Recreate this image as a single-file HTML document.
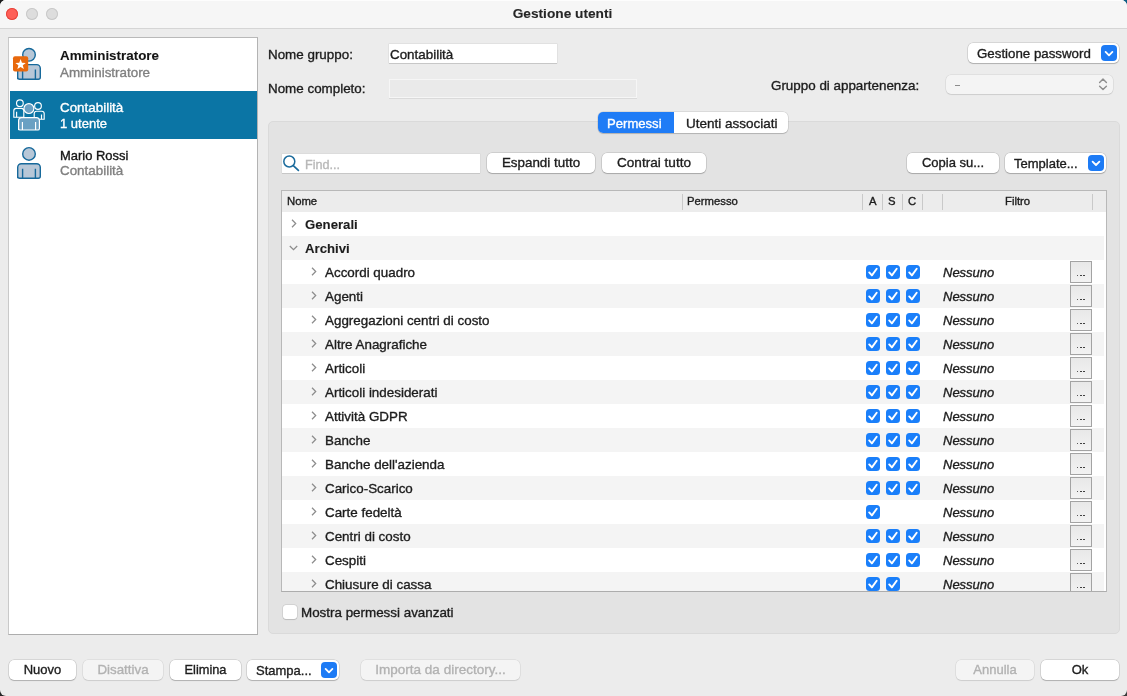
<!DOCTYPE html>
<html><head><meta charset="utf-8">
<style>
*{box-sizing:border-box;margin:0;padding:0}
html,body{width:1127px;height:696px;overflow:hidden;background:#222}
body{font-family:"Liberation Sans",sans-serif;font-size:13px;color:#1d1d1d;position:relative;-webkit-text-stroke:0.35px currentColor}
.win{will-change:transform;position:absolute;left:0;top:0;width:1127px;height:696px;border-radius:6px;background:#ececec;overflow:hidden}
.abs{position:absolute}
.t{position:absolute;white-space:nowrap;line-height:16px}
.title{left:0;top:0;width:1127px;height:29px;background:#f6f6f6;border-bottom:1px solid #d5d5d5;box-shadow:inset 0 1px 0 #fdfdfd}
.tl{position:absolute;top:8px;width:12px;height:12px;border-radius:50%}
.list{left:8px;top:37px;width:250px;height:598px;background:#fff;border:1px solid #b9b9b9;border-left-color:#c9c9c9;border-right-color:#b3b3b3;border-bottom:1.5px solid #adadad}
.sel{left:10px;top:91px;width:247px;height:48px;background:#0b75a5}
.field{background:#fff;box-shadow:0 0 0 0.5px #d6d6d6, 0 1px 0 0 #b9b9b9}
.btn{position:absolute;height:20px;border-radius:5px;background:#fff;box-shadow:0 0 0 0.5px rgba(0,0,0,.18),0 1px 1px rgba(0,0,0,.18);text-align:center;line-height:20px;font-size:13px;color:#1d1d1d}
.btn.dis{background:#f4f4f4;color:#b2b2b2;box-shadow:0 0 0 0.5px rgba(0,0,0,.1),0 1px 1px rgba(0,0,0,.08)}
.blue{position:absolute;width:16px;height:16px;border-radius:4px;background:#1d7bf5}
.blue svg{position:absolute;left:0;top:0}
.group{left:268px;top:121px;width:852px;height:513px;background:#e3e3e3;border:1px solid #dadada;border-radius:5px}
.table{left:281px;top:190px;width:826px;height:402px;background:#fff;border:1px solid #b8b8b8;border-bottom:1.5px solid #adadad;overflow:hidden}
.hdr{position:absolute;left:0;top:0;width:824px;height:21px;background:#ececec}
.sep{position:absolute;top:3px;width:1px;height:16px;background:#c9c9c9}
.row{position:absolute;left:0;width:822px;height:24px}
.row.alt{background:#f4f4f4}
.rt{position:absolute;top:5px;line-height:16px;font-size:13.4px;white-space:nowrap}
.chev{position:absolute;top:8px}
.cb{position:absolute;top:5px;width:14px;height:14px;border-radius:3.5px;background:#1a7ffa}
.nes{position:absolute;left:661px;top:5px;line-height:16px;font-style:italic;font-size:13px}
.dots{position:absolute;left:788px;top:1px;width:22px;height:22px;border:1px solid #a3a3a3;background:linear-gradient(#e8e8e8,#f2f2f2)}
.dots i{position:absolute;top:12.6px;width:1.9px;height:1.9px;border-radius:50%;background:#2a2a2a}
</style></head><body>
<div class="abs" style="left:0;top:0;width:20px;height:20px;background:#1c1c1c"></div><div class="abs" style="left:1107px;top:0;width:20px;height:20px;background:#0b5d84"></div><div class="abs" style="left:0;top:676px;width:20px;height:20px;background:#262626"></div><div class="abs" style="left:1107px;top:676px;width:20px;height:20px;background:#3a3a3a"></div>
<div class="win">
  <div class="abs title"></div>
  <div class="tl" style="left:6px;background:#fe5f57;box-shadow:inset 0 0 0 1px #e5443c"></div>
  <div class="tl" style="left:26px;background:#dddddd;box-shadow:inset 0 0 0 1px #c8c8c8"></div>
  <div class="tl" style="left:46px;background:#dddddd;box-shadow:inset 0 0 0 1px #c8c8c8"></div>
  <div class="t" style="left:-1px;width:1127px;text-align:center;top:6px;font-weight:bold;font-size:13.7px;color:#262626;-webkit-text-stroke:0.1px #262626">Gestione utenti</div>

  <!-- left list -->
  <div class="abs list"></div>
  <div class="abs sel"></div>

  <svg class="abs" style="left:0;top:0" width="60" height="190" viewBox="0 0 60 190">
    <g stroke="#17699b" stroke-width="1.4" fill="#b7c7d7">
      <circle cx="29" cy="54.8" r="6.3"/>
      <path d="M17.7 79.2 V68.2 a3.6 3.6 0 0 1 3.6 -3.6 H36.7 a3.6 3.6 0 0 1 3.6 3.6 V77.2 a2 2 0 0 1 -2 2 H19.7 a2 2 0 0 1 -2 -2 Z"/>
      <path d="M22.6 69.6 V79.2 M35.4 69.6 V79.2" fill="none"/>
    </g>
    <rect x="13" y="56.2" width="15.2" height="15.2" rx="2" fill="#e8680c"/>
    <path d="M20.60 59.10 L21.95 62.74 L25.83 62.90 L22.79 65.31 L23.83 69.05 L20.60 66.90 L17.37 69.05 L18.41 65.31 L15.37 62.90 L19.25 62.74 Z" fill="#fff"/>
    <g stroke="#17699b" stroke-width="1.4" fill="#b7c7d7">
      <circle cx="29" cy="153.9" r="6.3"/>
      <path d="M17.7 178.3 V167.3 a3.6 3.6 0 0 1 3.6 -3.6 H36.7 a3.6 3.6 0 0 1 3.6 3.6 V176.3 a2 2 0 0 1 -2 2 H19.7 a2 2 0 0 1 -2 -2 Z"/>
      <path d="M22.6 168.7 V178.3 M35.4 168.7 V178.3" fill="none"/>
    </g>
    <g stroke="#fff" stroke-width="1.15" fill="#0b75a5">
      <circle cx="19.9" cy="103.2" r="3.35"/>
      <circle cx="38" cy="106" r="3.35"/>
      <path d="M13.8 117.2 V110.8 a2.4 2.4 0 0 1 2.4 -2.4 H21.4 a2.4 2.4 0 0 1 2.4 2.4 V117.2 Z"/>
      <path d="M16.6 111.8 V117.2" fill="none"/>
      <path d="M34.2 119.2 V113.6 a2.4 2.4 0 0 1 2.4 -2.4 H41.8 a2.4 2.4 0 0 1 2.4 2.4 V119.2 Z"/>
      <path d="M41.5 114.6 V119.2" fill="none"/>
      <circle cx="28.9" cy="108.5" r="4.95" fill="#6aa0c3"/>
      <path d="M18.6 130 V120.6 a3 3 0 0 1 3 -3 H36.4 a3 3 0 0 1 3 3 V128.4 a1.6 1.6 0 0 1 -1.6 1.6 H20.2 a1.6 1.6 0 0 1 -1.6 -1.6 Z" fill="#6aa0c3"/>
      <path d="M22.4 122 V130 M35.6 122 V130" fill="none"/>
    </g>
  </svg>
  <div class="t" style="left:60px;top:48.3px;font-weight:bold;font-size:13.4px;color:#141414;-webkit-text-stroke:0.1px #141414">Amministratore</div>
  <div class="t" style="left:60px;top:64.5px;font-size:13.4px;color:#808080">Amministratore</div>
  <div class="t" style="left:60px;top:99.7px;font-size:13.4px;color:#fff">Contabilità</div>
  <div class="t" style="left:60px;top:115.5px;font-size:13px;color:#fff">1 utente</div>
  <div class="t" style="left:60px;top:147.6px;font-size:12.95px;color:#141414">Mario Rossi</div>
  <div class="t" style="left:60px;top:163.4px;font-size:13.4px;color:#808080">Contabilità</div>

  <!-- right form -->
  <div class="t" style="left:268px;top:46.6px;font-size:13.4px">Nome gruppo:</div>
  <div class="abs field" style="left:389px;top:44px;width:168px;height:19px"></div>
  <div class="t" style="left:390px;top:46.6px;font-size:13.4px">Contabilità</div>
  <div class="t" style="left:268px;top:80.6px;font-size:13.4px">Nome completo:</div>
  <div class="abs" style="left:389px;top:79px;width:248px;height:19px;background:#eaeaea;border:1px solid #f6f6f6;box-shadow:0 1px 0 #dadada"></div>

  <div class="btn" style="left:968px;top:42.5px;width:151px;height:20px;line-height:22px;text-align:left;padding-left:9px;font-size:13.3px">Gestione password</div>
  <div class="blue" style="left:1101px;top:44.5px"><svg width="16" height="16" viewBox="0 0 16 16"><path d="M4.6 6.9 L8 10.3 L11.4 6.9" fill="none" stroke="#fff" stroke-width="1.8" stroke-linecap="round" stroke-linejoin="round"/></svg></div>

  <div class="t" style="left:771px;top:78px;font-size:13.4px">Gruppo di appartenenza:</div>
  <div class="btn dis" style="left:946px;top:74.5px;width:167px;height:19.5px"></div>
  <div class="abs" style="left:955px;top:85px;width:4.5px;height:1.2px;background:#8c8c8c"></div>
  <svg class="abs" style="left:1096px;top:76px" width="14" height="16" viewBox="0 0 14 16"><path d="M3.6 6.5 L7 3.1 L10.4 6.5 M3.6 10.2 L7 13.6 L10.4 10.2" fill="none" stroke="#8e8e8e" stroke-width="1.4" stroke-linecap="round" stroke-linejoin="round"/></svg>

  <!-- group box -->
  <div class="abs group"></div>
  <!-- segmented -->
  <div class="abs" style="left:598px;top:112px;width:190px;height:21px;border-radius:5px;background:#fff;box-shadow:0 0 0 0.5px rgba(0,0,0,.15),0 1px 1px rgba(0,0,0,.15)"></div>
  <div class="abs" style="left:598px;top:112px;width:76px;height:21px;border-radius:5px 0 0 5px;background:#1f7cf6"></div>
  <div class="t" style="left:607px;top:116px;color:#fff;font-size:13.1px">Permessi</div>
  <div class="t" style="left:686px;top:116px;font-size:13.5px">Utenti associati</div>

  <!-- search row -->
  <div class="abs field" style="left:282px;top:154px;width:198px;height:19px"></div>
  <svg class="abs" style="left:281px;top:153px" width="20" height="20" viewBox="0 0 20 20"><circle cx="8.3" cy="8.5" r="5.5" fill="none" stroke="#1b6b9c" stroke-width="1.5"/><path d="M12.3 12.6 L17.4 17.4" stroke="#1b6b9c" stroke-width="1.7" stroke-linecap="round"/></svg>
  <div class="t" style="left:305px;top:156.5px;color:#b8b8b8;font-size:12.6px">Find...</div>
  <div class="btn" style="left:487px;top:153px;width:108px;font-size:13.4px">Espandi tutto</div>
  <div class="btn" style="left:602px;top:153px;width:104px;font-size:13.6px">Contrai tutto</div>
  <div class="btn" style="left:907px;top:153px;width:92px">Copia su...</div>
  <div class="btn" style="left:1005px;top:153px;width:101px;text-align:left;padding-left:9px;line-height:22px">Template...</div>
  <div class="blue" style="left:1088px;top:155px;width:16px;height:15.5px"><svg width="16" height="15.5" viewBox="0 0.3 16 15.5"><path d="M4.6 6.9 L8 10.3 L11.4 6.9" fill="none" stroke="#fff" stroke-width="1.8" stroke-linecap="round" stroke-linejoin="round"/></svg></div>

  <!-- table -->
  <div class="abs table" id="tbl">
    <div class="hdr">
      <div class="t" style="left:5px;top:2px;font-size:11.3px">Nome</div>
      <div class="sep" style="left:400px"></div>
      <div class="t" style="left:405px;top:2px;font-size:11.3px">Permesso</div>
      <div class="sep" style="left:580px"></div>
      <div class="t" style="left:587px;top:2px;font-size:11.3px">A</div>
      <div class="sep" style="left:600px"></div>
      <div class="t" style="left:606px;top:2px;font-size:11.3px">S</div>
      <div class="sep" style="left:620px"></div>
      <div class="t" style="left:626px;top:2px;font-size:11.3px">C</div>
      <div class="sep" style="left:640px"></div>
      <div class="sep" style="left:660px"></div>
      <div class="t" style="left:723px;top:2px;font-size:11.3px">Filtro</div>
      <div class="sep" style="left:810px"></div>
    </div>
<div class="row" style="top:21px"><svg class="chev" style="left:9.3px;top:7.2px" width="6" height="9" viewBox="0 0 6 9"><path d="M1 0.8 L4.7 4.5 L1 8.2" fill="none" stroke="#8c8c8c" stroke-width="1.25"/></svg><div class="rt" style="left:23px;font-weight:bold;font-size:13.2px;-webkit-text-stroke:0.1px #1d1d1d">Generali</div></div>
<div class="row alt" style="top:45px"><svg class="chev" style="left:7px;top:9.3px" width="9" height="6" viewBox="0 0 9 6"><path d="M0.8 1 L4.5 4.7 L8.2 1" fill="none" stroke="#8c8c8c" stroke-width="1.25"/></svg><div class="rt" style="left:23px;font-weight:bold;font-size:13.2px;-webkit-text-stroke:0.1px #1d1d1d">Archivi</div></div>
<div class="row" style="top:69px"><svg class="chev" style="left:29.3px;top:7.2px" width="6" height="9" viewBox="0 0 6 9"><path d="M1 0.8 L4.7 4.5 L1 8.2" fill="none" stroke="#8c8c8c" stroke-width="1.25"/></svg><div class="rt" style="left:43px">Accordi quadro</div><div class="cb" style="left:584px"><svg width="14" height="14" viewBox="0 0 14 14"><path d="M3.2 7.4 L5.9 10.4 L10.7 3.7" fill="none" stroke="#fff" stroke-width="1.9" stroke-linecap="round" stroke-linejoin="round"/></svg></div><div class="cb" style="left:604px"><svg width="14" height="14" viewBox="0 0 14 14"><path d="M3.2 7.4 L5.9 10.4 L10.7 3.7" fill="none" stroke="#fff" stroke-width="1.9" stroke-linecap="round" stroke-linejoin="round"/></svg></div><div class="cb" style="left:624px"><svg width="14" height="14" viewBox="0 0 14 14"><path d="M3.2 7.4 L5.9 10.4 L10.7 3.7" fill="none" stroke="#fff" stroke-width="1.9" stroke-linecap="round" stroke-linejoin="round"/></svg></div><div class="nes">Nessuno</div><div class="dots"><i style="left:5.6px"></i><i style="left:8.8px"></i><i style="left:12.2px"></i></div></div>
<div class="row alt" style="top:93px"><svg class="chev" style="left:29.3px;top:7.2px" width="6" height="9" viewBox="0 0 6 9"><path d="M1 0.8 L4.7 4.5 L1 8.2" fill="none" stroke="#8c8c8c" stroke-width="1.25"/></svg><div class="rt" style="left:43px">Agenti</div><div class="cb" style="left:584px"><svg width="14" height="14" viewBox="0 0 14 14"><path d="M3.2 7.4 L5.9 10.4 L10.7 3.7" fill="none" stroke="#fff" stroke-width="1.9" stroke-linecap="round" stroke-linejoin="round"/></svg></div><div class="cb" style="left:604px"><svg width="14" height="14" viewBox="0 0 14 14"><path d="M3.2 7.4 L5.9 10.4 L10.7 3.7" fill="none" stroke="#fff" stroke-width="1.9" stroke-linecap="round" stroke-linejoin="round"/></svg></div><div class="cb" style="left:624px"><svg width="14" height="14" viewBox="0 0 14 14"><path d="M3.2 7.4 L5.9 10.4 L10.7 3.7" fill="none" stroke="#fff" stroke-width="1.9" stroke-linecap="round" stroke-linejoin="round"/></svg></div><div class="nes">Nessuno</div><div class="dots"><i style="left:5.6px"></i><i style="left:8.8px"></i><i style="left:12.2px"></i></div></div>
<div class="row" style="top:117px"><svg class="chev" style="left:29.3px;top:7.2px" width="6" height="9" viewBox="0 0 6 9"><path d="M1 0.8 L4.7 4.5 L1 8.2" fill="none" stroke="#8c8c8c" stroke-width="1.25"/></svg><div class="rt" style="left:43px">Aggregazioni centri di costo</div><div class="cb" style="left:584px"><svg width="14" height="14" viewBox="0 0 14 14"><path d="M3.2 7.4 L5.9 10.4 L10.7 3.7" fill="none" stroke="#fff" stroke-width="1.9" stroke-linecap="round" stroke-linejoin="round"/></svg></div><div class="cb" style="left:604px"><svg width="14" height="14" viewBox="0 0 14 14"><path d="M3.2 7.4 L5.9 10.4 L10.7 3.7" fill="none" stroke="#fff" stroke-width="1.9" stroke-linecap="round" stroke-linejoin="round"/></svg></div><div class="cb" style="left:624px"><svg width="14" height="14" viewBox="0 0 14 14"><path d="M3.2 7.4 L5.9 10.4 L10.7 3.7" fill="none" stroke="#fff" stroke-width="1.9" stroke-linecap="round" stroke-linejoin="round"/></svg></div><div class="nes">Nessuno</div><div class="dots"><i style="left:5.6px"></i><i style="left:8.8px"></i><i style="left:12.2px"></i></div></div>
<div class="row alt" style="top:141px"><svg class="chev" style="left:29.3px;top:7.2px" width="6" height="9" viewBox="0 0 6 9"><path d="M1 0.8 L4.7 4.5 L1 8.2" fill="none" stroke="#8c8c8c" stroke-width="1.25"/></svg><div class="rt" style="left:43px">Altre Anagrafiche</div><div class="cb" style="left:584px"><svg width="14" height="14" viewBox="0 0 14 14"><path d="M3.2 7.4 L5.9 10.4 L10.7 3.7" fill="none" stroke="#fff" stroke-width="1.9" stroke-linecap="round" stroke-linejoin="round"/></svg></div><div class="cb" style="left:604px"><svg width="14" height="14" viewBox="0 0 14 14"><path d="M3.2 7.4 L5.9 10.4 L10.7 3.7" fill="none" stroke="#fff" stroke-width="1.9" stroke-linecap="round" stroke-linejoin="round"/></svg></div><div class="cb" style="left:624px"><svg width="14" height="14" viewBox="0 0 14 14"><path d="M3.2 7.4 L5.9 10.4 L10.7 3.7" fill="none" stroke="#fff" stroke-width="1.9" stroke-linecap="round" stroke-linejoin="round"/></svg></div><div class="nes">Nessuno</div><div class="dots"><i style="left:5.6px"></i><i style="left:8.8px"></i><i style="left:12.2px"></i></div></div>
<div class="row" style="top:165px"><svg class="chev" style="left:29.3px;top:7.2px" width="6" height="9" viewBox="0 0 6 9"><path d="M1 0.8 L4.7 4.5 L1 8.2" fill="none" stroke="#8c8c8c" stroke-width="1.25"/></svg><div class="rt" style="left:43px">Articoli</div><div class="cb" style="left:584px"><svg width="14" height="14" viewBox="0 0 14 14"><path d="M3.2 7.4 L5.9 10.4 L10.7 3.7" fill="none" stroke="#fff" stroke-width="1.9" stroke-linecap="round" stroke-linejoin="round"/></svg></div><div class="cb" style="left:604px"><svg width="14" height="14" viewBox="0 0 14 14"><path d="M3.2 7.4 L5.9 10.4 L10.7 3.7" fill="none" stroke="#fff" stroke-width="1.9" stroke-linecap="round" stroke-linejoin="round"/></svg></div><div class="cb" style="left:624px"><svg width="14" height="14" viewBox="0 0 14 14"><path d="M3.2 7.4 L5.9 10.4 L10.7 3.7" fill="none" stroke="#fff" stroke-width="1.9" stroke-linecap="round" stroke-linejoin="round"/></svg></div><div class="nes">Nessuno</div><div class="dots"><i style="left:5.6px"></i><i style="left:8.8px"></i><i style="left:12.2px"></i></div></div>
<div class="row alt" style="top:189px"><svg class="chev" style="left:29.3px;top:7.2px" width="6" height="9" viewBox="0 0 6 9"><path d="M1 0.8 L4.7 4.5 L1 8.2" fill="none" stroke="#8c8c8c" stroke-width="1.25"/></svg><div class="rt" style="left:43px">Articoli indesiderati</div><div class="cb" style="left:584px"><svg width="14" height="14" viewBox="0 0 14 14"><path d="M3.2 7.4 L5.9 10.4 L10.7 3.7" fill="none" stroke="#fff" stroke-width="1.9" stroke-linecap="round" stroke-linejoin="round"/></svg></div><div class="cb" style="left:604px"><svg width="14" height="14" viewBox="0 0 14 14"><path d="M3.2 7.4 L5.9 10.4 L10.7 3.7" fill="none" stroke="#fff" stroke-width="1.9" stroke-linecap="round" stroke-linejoin="round"/></svg></div><div class="cb" style="left:624px"><svg width="14" height="14" viewBox="0 0 14 14"><path d="M3.2 7.4 L5.9 10.4 L10.7 3.7" fill="none" stroke="#fff" stroke-width="1.9" stroke-linecap="round" stroke-linejoin="round"/></svg></div><div class="nes">Nessuno</div><div class="dots"><i style="left:5.6px"></i><i style="left:8.8px"></i><i style="left:12.2px"></i></div></div>
<div class="row" style="top:213px"><svg class="chev" style="left:29.3px;top:7.2px" width="6" height="9" viewBox="0 0 6 9"><path d="M1 0.8 L4.7 4.5 L1 8.2" fill="none" stroke="#8c8c8c" stroke-width="1.25"/></svg><div class="rt" style="left:43px">Attività GDPR</div><div class="cb" style="left:584px"><svg width="14" height="14" viewBox="0 0 14 14"><path d="M3.2 7.4 L5.9 10.4 L10.7 3.7" fill="none" stroke="#fff" stroke-width="1.9" stroke-linecap="round" stroke-linejoin="round"/></svg></div><div class="cb" style="left:604px"><svg width="14" height="14" viewBox="0 0 14 14"><path d="M3.2 7.4 L5.9 10.4 L10.7 3.7" fill="none" stroke="#fff" stroke-width="1.9" stroke-linecap="round" stroke-linejoin="round"/></svg></div><div class="cb" style="left:624px"><svg width="14" height="14" viewBox="0 0 14 14"><path d="M3.2 7.4 L5.9 10.4 L10.7 3.7" fill="none" stroke="#fff" stroke-width="1.9" stroke-linecap="round" stroke-linejoin="round"/></svg></div><div class="nes">Nessuno</div><div class="dots"><i style="left:5.6px"></i><i style="left:8.8px"></i><i style="left:12.2px"></i></div></div>
<div class="row alt" style="top:237px"><svg class="chev" style="left:29.3px;top:7.2px" width="6" height="9" viewBox="0 0 6 9"><path d="M1 0.8 L4.7 4.5 L1 8.2" fill="none" stroke="#8c8c8c" stroke-width="1.25"/></svg><div class="rt" style="left:43px">Banche</div><div class="cb" style="left:584px"><svg width="14" height="14" viewBox="0 0 14 14"><path d="M3.2 7.4 L5.9 10.4 L10.7 3.7" fill="none" stroke="#fff" stroke-width="1.9" stroke-linecap="round" stroke-linejoin="round"/></svg></div><div class="cb" style="left:604px"><svg width="14" height="14" viewBox="0 0 14 14"><path d="M3.2 7.4 L5.9 10.4 L10.7 3.7" fill="none" stroke="#fff" stroke-width="1.9" stroke-linecap="round" stroke-linejoin="round"/></svg></div><div class="cb" style="left:624px"><svg width="14" height="14" viewBox="0 0 14 14"><path d="M3.2 7.4 L5.9 10.4 L10.7 3.7" fill="none" stroke="#fff" stroke-width="1.9" stroke-linecap="round" stroke-linejoin="round"/></svg></div><div class="nes">Nessuno</div><div class="dots"><i style="left:5.6px"></i><i style="left:8.8px"></i><i style="left:12.2px"></i></div></div>
<div class="row" style="top:261px"><svg class="chev" style="left:29.3px;top:7.2px" width="6" height="9" viewBox="0 0 6 9"><path d="M1 0.8 L4.7 4.5 L1 8.2" fill="none" stroke="#8c8c8c" stroke-width="1.25"/></svg><div class="rt" style="left:43px">Banche dell'azienda</div><div class="cb" style="left:584px"><svg width="14" height="14" viewBox="0 0 14 14"><path d="M3.2 7.4 L5.9 10.4 L10.7 3.7" fill="none" stroke="#fff" stroke-width="1.9" stroke-linecap="round" stroke-linejoin="round"/></svg></div><div class="cb" style="left:604px"><svg width="14" height="14" viewBox="0 0 14 14"><path d="M3.2 7.4 L5.9 10.4 L10.7 3.7" fill="none" stroke="#fff" stroke-width="1.9" stroke-linecap="round" stroke-linejoin="round"/></svg></div><div class="cb" style="left:624px"><svg width="14" height="14" viewBox="0 0 14 14"><path d="M3.2 7.4 L5.9 10.4 L10.7 3.7" fill="none" stroke="#fff" stroke-width="1.9" stroke-linecap="round" stroke-linejoin="round"/></svg></div><div class="nes">Nessuno</div><div class="dots"><i style="left:5.6px"></i><i style="left:8.8px"></i><i style="left:12.2px"></i></div></div>
<div class="row alt" style="top:285px"><svg class="chev" style="left:29.3px;top:7.2px" width="6" height="9" viewBox="0 0 6 9"><path d="M1 0.8 L4.7 4.5 L1 8.2" fill="none" stroke="#8c8c8c" stroke-width="1.25"/></svg><div class="rt" style="left:43px">Carico-Scarico</div><div class="cb" style="left:584px"><svg width="14" height="14" viewBox="0 0 14 14"><path d="M3.2 7.4 L5.9 10.4 L10.7 3.7" fill="none" stroke="#fff" stroke-width="1.9" stroke-linecap="round" stroke-linejoin="round"/></svg></div><div class="cb" style="left:604px"><svg width="14" height="14" viewBox="0 0 14 14"><path d="M3.2 7.4 L5.9 10.4 L10.7 3.7" fill="none" stroke="#fff" stroke-width="1.9" stroke-linecap="round" stroke-linejoin="round"/></svg></div><div class="cb" style="left:624px"><svg width="14" height="14" viewBox="0 0 14 14"><path d="M3.2 7.4 L5.9 10.4 L10.7 3.7" fill="none" stroke="#fff" stroke-width="1.9" stroke-linecap="round" stroke-linejoin="round"/></svg></div><div class="nes">Nessuno</div><div class="dots"><i style="left:5.6px"></i><i style="left:8.8px"></i><i style="left:12.2px"></i></div></div>
<div class="row" style="top:309px"><svg class="chev" style="left:29.3px;top:7.2px" width="6" height="9" viewBox="0 0 6 9"><path d="M1 0.8 L4.7 4.5 L1 8.2" fill="none" stroke="#8c8c8c" stroke-width="1.25"/></svg><div class="rt" style="left:43px">Carte fedeltà</div><div class="cb" style="left:584px"><svg width="14" height="14" viewBox="0 0 14 14"><path d="M3.2 7.4 L5.9 10.4 L10.7 3.7" fill="none" stroke="#fff" stroke-width="1.9" stroke-linecap="round" stroke-linejoin="round"/></svg></div><div class="nes">Nessuno</div><div class="dots"><i style="left:5.6px"></i><i style="left:8.8px"></i><i style="left:12.2px"></i></div></div>
<div class="row alt" style="top:333px"><svg class="chev" style="left:29.3px;top:7.2px" width="6" height="9" viewBox="0 0 6 9"><path d="M1 0.8 L4.7 4.5 L1 8.2" fill="none" stroke="#8c8c8c" stroke-width="1.25"/></svg><div class="rt" style="left:43px">Centri di costo</div><div class="cb" style="left:584px"><svg width="14" height="14" viewBox="0 0 14 14"><path d="M3.2 7.4 L5.9 10.4 L10.7 3.7" fill="none" stroke="#fff" stroke-width="1.9" stroke-linecap="round" stroke-linejoin="round"/></svg></div><div class="cb" style="left:604px"><svg width="14" height="14" viewBox="0 0 14 14"><path d="M3.2 7.4 L5.9 10.4 L10.7 3.7" fill="none" stroke="#fff" stroke-width="1.9" stroke-linecap="round" stroke-linejoin="round"/></svg></div><div class="cb" style="left:624px"><svg width="14" height="14" viewBox="0 0 14 14"><path d="M3.2 7.4 L5.9 10.4 L10.7 3.7" fill="none" stroke="#fff" stroke-width="1.9" stroke-linecap="round" stroke-linejoin="round"/></svg></div><div class="nes">Nessuno</div><div class="dots"><i style="left:5.6px"></i><i style="left:8.8px"></i><i style="left:12.2px"></i></div></div>
<div class="row" style="top:357px"><svg class="chev" style="left:29.3px;top:7.2px" width="6" height="9" viewBox="0 0 6 9"><path d="M1 0.8 L4.7 4.5 L1 8.2" fill="none" stroke="#8c8c8c" stroke-width="1.25"/></svg><div class="rt" style="left:43px">Cespiti</div><div class="cb" style="left:584px"><svg width="14" height="14" viewBox="0 0 14 14"><path d="M3.2 7.4 L5.9 10.4 L10.7 3.7" fill="none" stroke="#fff" stroke-width="1.9" stroke-linecap="round" stroke-linejoin="round"/></svg></div><div class="cb" style="left:604px"><svg width="14" height="14" viewBox="0 0 14 14"><path d="M3.2 7.4 L5.9 10.4 L10.7 3.7" fill="none" stroke="#fff" stroke-width="1.9" stroke-linecap="round" stroke-linejoin="round"/></svg></div><div class="cb" style="left:624px"><svg width="14" height="14" viewBox="0 0 14 14"><path d="M3.2 7.4 L5.9 10.4 L10.7 3.7" fill="none" stroke="#fff" stroke-width="1.9" stroke-linecap="round" stroke-linejoin="round"/></svg></div><div class="nes">Nessuno</div><div class="dots"><i style="left:5.6px"></i><i style="left:8.8px"></i><i style="left:12.2px"></i></div></div>
<div class="row alt" style="top:381px"><svg class="chev" style="left:29.3px;top:7.2px" width="6" height="9" viewBox="0 0 6 9"><path d="M1 0.8 L4.7 4.5 L1 8.2" fill="none" stroke="#8c8c8c" stroke-width="1.25"/></svg><div class="rt" style="left:43px">Chiusure di cassa</div><div class="cb" style="left:584px"><svg width="14" height="14" viewBox="0 0 14 14"><path d="M3.2 7.4 L5.9 10.4 L10.7 3.7" fill="none" stroke="#fff" stroke-width="1.9" stroke-linecap="round" stroke-linejoin="round"/></svg></div><div class="cb" style="left:604px"><svg width="14" height="14" viewBox="0 0 14 14"><path d="M3.2 7.4 L5.9 10.4 L10.7 3.7" fill="none" stroke="#fff" stroke-width="1.9" stroke-linecap="round" stroke-linejoin="round"/></svg></div><div class="nes">Nessuno</div><div class="dots"><i style="left:5.6px"></i><i style="left:8.8px"></i><i style="left:12.2px"></i></div></div>
  </div>

  <!-- mostra -->
  <div class="abs" style="left:283.3px;top:605.2px;width:13.4px;height:13.6px;border-radius:3px;background:#fff;box-shadow:0 0 0 0.5px rgba(0,0,0,.13),0 0.5px 1px rgba(0,0,0,.12)"></div>
  <div class="t" style="left:301px;top:605px;font-size:13.4px">Mostra permessi avanzati</div>

  <!-- bottom -->
  <div class="btn" style="left:9px;top:660px;width:67px">Nuovo</div>
  <div class="btn dis" style="left:83px;top:660px;width:80px;font-size:13.35px">Disattiva</div>
  <div class="btn" style="left:170px;top:660px;width:71px;font-size:12.8px">Elimina</div>
  <div class="btn" style="left:247px;top:660px;width:92px;text-align:left;padding-left:9px;line-height:22px">Stampa...</div>
  <div class="blue" style="left:321px;top:662px"><svg width="16" height="16" viewBox="0 0 16 16"><path d="M4.6 6.9 L8 10.3 L11.4 6.9" fill="none" stroke="#fff" stroke-width="1.8" stroke-linecap="round" stroke-linejoin="round"/></svg></div>
  <div class="btn dis" style="left:361px;top:660px;width:159px;font-size:13.5px">Importa da directory...</div>
  <div class="btn dis" style="left:956px;top:660px;width:78px">Annulla</div>
  <div class="btn" style="left:1041px;top:660px;width:78px">Ok</div>
</div>
</body></html>
